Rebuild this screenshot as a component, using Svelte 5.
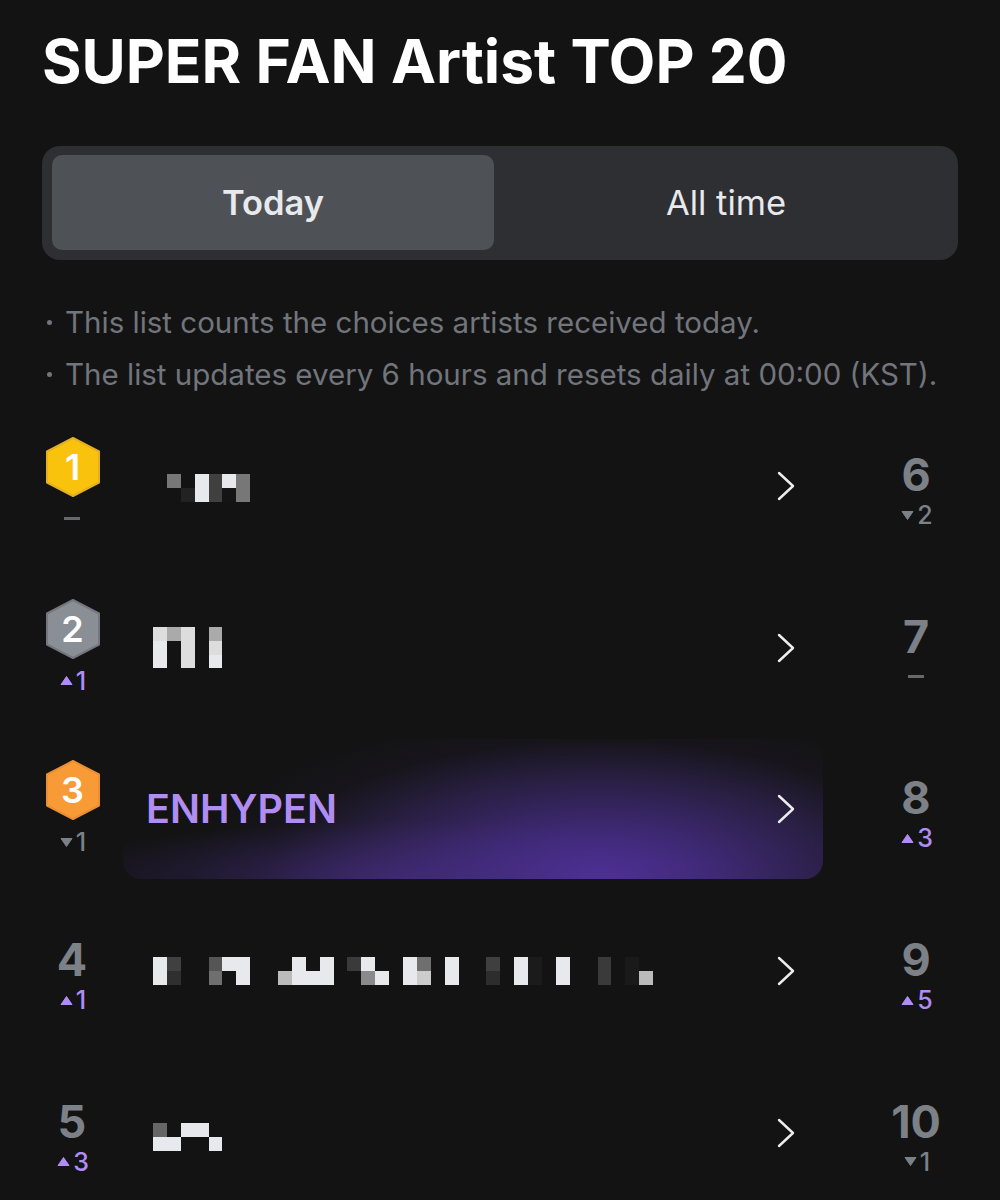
<script>
  const w = '#e8e9ec';

  // name mosaics, listed per column from the top, null = no cell
  const mosaics = {
    one: { rows: 2, drop: 4, cols: [[null, null], ['#777', null], [null, '#222'], [w, w], ['#404040', '#404040'], [w, '#151515'], ['#777', '#777']] },
    two: { rows: 3, drop: 0, cols: [['#ddd', w, w], ['#aaa', null, null], ['#ddd', '#ddd', '#ddd'], [null, null, null], ['#aaa', '#ddd', w]] },
    four: { rows: 2, drop: 0, cols: [
      [w, w], ['#404040', '#2f2f2f'], [null, null], [null, null], ['#555', '#6f6f6f'], [w, null], [w, w], [null, null], [null, null],
      [null, '#bbb'], [w, w], [null, w], [w, w], [null, null], ['#3a3a3a', null], [w, '#8a8a8a'], [null, w], [null, null],
      [w, w], ['#6f6f6f', '#ccc'], [null, null], [w, w], [null, null], [null, null], ['#3f3f3f', '#2d2d2d'], [null, null],
      [w, w], ['#1b1b1b', '#1b1b1b'], [null, null], [w, w], [null, null], [null, null], ['#3a3a3a', '#3a3a3a'], [null, null],
      ['#1a1a1a', '#1a1a1a'], [null, '#bbb']
    ] },
    five: { rows: 2, drop: 8, cols: [['#666', w], [null, w], [w, null], [w, null], [null, w]] }
  };

  const rows = [
    { rank: 1, medal: 'gold', delta: 0, mosaic: mosaics.one, next: { rank: 6, delta: -2 } },
    { rank: 2, medal: 'silver', delta: 1, mosaic: mosaics.two, next: { rank: 7, delta: 0 } },
    { rank: 3, medal: 'bronze', delta: -1, name: 'ENHYPEN', next: { rank: 8, delta: 3 } },
    { rank: 4, delta: 1, mosaic: mosaics.four, next: { rank: 9, delta: 5 } },
    { rank: 5, delta: 3, mosaic: mosaics.five, next: { rank: 10, delta: -1 } }
  ];
</script>

{#snippet delta(value)}
  {#if value === 0}
    <span class="dash"></span>
  {:else}
    <span class="delta" class:up={value > 0}>
      <svg width="13" height="11" viewBox="0 0 13 11" aria-hidden="true">
        <path d={value > 0 ? 'M6.5 1.5 12 9.5H1z' : 'M1 1.5h11L6.5 9.5z'} fill="currentColor" stroke="currentColor" stroke-linejoin="round" />
      </svg>
      {Math.abs(value)}
    </span>
  {/if}
{/snippet}

<div class="page">
  <h1>SUPER FAN Artist TOP 20</h1>

  <div class="tabs">
    <button class="tab active">Today</button>
    <button class="tab">All time</button>
  </div>

  <ul class="notes">
    <li>This list counts the choices artists received today.</li>
    <li>The list updates every 6 hours and resets daily at 00:00 (KST).</li>
  </ul>

  <div class="chart">
    {#each rows as row (row.rank)}
      <div class="row">
        <div class="rank" class:medalled={row.medal}>
          {#if row.medal}
            <span class="medal {row.medal}">
              <svg width="56" height="62" viewBox="0 0 56 62" aria-hidden="true">
                <path d="M28 2 54 15.5V46.5L28 60 2 46.5V15.5Z" stroke-width="2" stroke-linejoin="round" />
              </svg>
              <span class="medal-num">{row.rank}</span>
            </span>
          {:else}
            <span class="num">{row.rank}</span>
          {/if}
          {@render delta(row.delta)}
        </div>

        <a class="artist" class:fan={row.name} href="#top">
          {#if row.name}
            <span class="name">{row.name}</span>
          {:else}
            <span class="mosaic" style="grid-template-rows: repeat({row.mosaic.rows}, 13.8px); margin-top: {row.mosaic.drop}px">
              {#each row.mosaic.cols as col}
                {#each col as cell}
                  <i style={cell ? `background: ${cell}` : ''}></i>
                {/each}
              {/each}
            </span>
          {/if}
          <svg class="chevron" width="20" height="30" viewBox="0 0 20 30" aria-hidden="true">
            <path d="M3 2 17 15 3 28" fill="none" stroke="#eceded" stroke-width="2.4" stroke-linecap="round" stroke-linejoin="round" />
          </svg>
        </a>

        <div class="rank next">
          <span class="num">{row.next.rank}</span>
          {@render delta(row.next.delta)}
        </div>
      </div>
    {/each}
  </div>
</div>

<style>
  :global(body) {
    background: #131314;
  }

  .page {
    height: 1200px;
    overflow: hidden;
    box-sizing: border-box;
    padding: 25px 42px 0;
    background: #131314;
    font-family: Inter, "Liberation Sans", sans-serif;
  }

  h1 {
    margin: 0;
    font-size: 60.4px;
    line-height: 72px;
    font-weight: 700;
    color: #fff;
    white-space: nowrap;
  }

  .tabs {
    display: flex;
    box-sizing: border-box;
    height: 114px;
    margin-top: 49px;
    padding: 9px 0 10px 10px;
    border-radius: 18px;
    background: #2e2f33;
  }

  .tab {
    flex: 1;
    border: none;
    border-radius: 10px;
    background: none;
    font-family: inherit;
    font-size: 34.5px;
    color: #e8e9ec;
  }

  .tab.active {
    flex: none;
    width: 442px;
    background: #4e5156;
    font-weight: 600;
  }

  .notes {
    margin: 36px 0 0;
    padding: 0;
    list-style: none;
    font-size: 29.5px;
    line-height: 52px;
    color: #72757b;
    white-space: nowrap;
  }

  .notes li {
    display: flex;
    align-items: center;
    gap: 13px;
  }

  .notes li::before {
    content: "";
    width: 5px;
    height: 5px;
    margin-left: 5px;
    border-radius: 50%;
    background: #72757b;
  }

  .chart {
    display: flex;
    flex-direction: column;
    gap: 21.7px;
    margin-top: 16px;
  }

  .row {
    display: flex;
    height: 140px;
    flex-shrink: 0;
  }

  .rank {
    display: flex;
    flex-direction: column;
    align-items: center;
    flex: none;
    box-sizing: border-box;
    width: 60px;
    padding-top: 36px;
  }

  .rank.medalled {
    padding-top: 20px;
  }

  .next {
    width: 60px;
    margin-left: 63px;
  }

  .num {
    margin-bottom: 2px;
    font-size: 45px;
    line-height: 46px;
    font-weight: 700;
    color: #7c8087;
  }

  .medal {
    position: relative;
    display: block;
    width: 56px;
    height: 62px;
    margin: 0 0 6px 1px;
  }

  .medal svg {
    display: block;
  }

  .medal-num {
    position: absolute;
    inset: 0;
    text-align: center;
    font-size: 36px;
    line-height: 62px;
    font-weight: 600;
    color: #fff;
  }

  .gold path {
    fill: #f9c20c;
    stroke: #e3b024;
  }

  .silver path {
    fill: #8a8e95;
    stroke: #74787e;
  }

  .bronze path {
    fill: #f89a35;
    stroke: #ea9034;
  }

  .delta {
    display: flex;
    align-items: center;
    gap: 3px;
    margin-left: 2px;
    font-size: 25px;
    line-height: 30px;
    font-weight: 500;
    color: #7c8087;
  }

  .delta.up {
    color: #b18df3;
  }

  .dash {
    width: 16px;
    height: 3px;
    margin: 13px 0 14px;
    background: #65686d;
  }

  .artist {
    display: flex;
    align-items: center;
    justify-content: space-between;
    box-sizing: border-box;
    flex: none;
    width: 700px;
    height: 140px;
    margin-left: 21px;
    padding: 0 27px 0 30px;
    border-radius: 18px;
    text-decoration: none;
  }

  .fan {
    padding-left: 23px;
    background:
      radial-gradient(ellipse 50% 42% at 40% 100%, rgba(72, 46, 135, 0.6), rgba(72, 46, 135, 0) 100%),
      radial-gradient(ellipse 58% 120% at 68% 100%, #50309a 0%, #3c2870 32%, #291f42 60%, #17151c 82%, #131314 100%);
  }

  .name {
    font-size: 39.5px;
    font-weight: 600;
    color: #b18df3;
  }

  .mosaic {
    display: grid;
    grid-auto-flow: column;
    grid-auto-columns: 13.9px;
  }

  .chevron {
    display: block;
  }
</style>
